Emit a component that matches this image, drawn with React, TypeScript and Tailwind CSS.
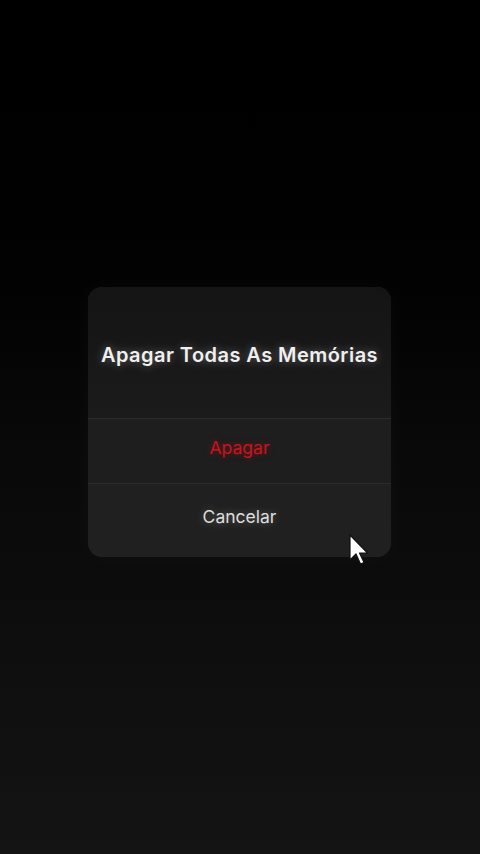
export default function App() {
  return (
    <div
      className="relative w-[480px] h-[854px] overflow-hidden bg-gradient-to-b from-[#000000] via-[#080808] to-[#141414]"
      style={{ fontFamily: "Inter, 'Noto Sans', sans-serif" }}
    >
      <div className="pt-[287px] pl-[88px]">
        <div className="w-[303px] rounded-[14px] overflow-hidden bg-[#1a1a1a] shadow-[0_0_24px_rgba(255,255,255,0.03)]">
          <div className="h-[131px] flex items-center justify-center pt-[5px] bg-gradient-to-b from-[#141414] to-[#1b1b1b]">
            <span className="text-[20px] font-semibold text-[#f0f0f0] tracking-[0.45px] [text-shadow:0_0_10px_rgba(255,255,255,0.35)]">
              Apagar Todas As Memórias
            </span>
          </div>
          <div className="h-[65px] flex items-center justify-center pb-[5px] border-t border-[#2c2c2c] bg-[#1e1e1e]">
            <span className="text-[17.5px] text-[#c8141c] [text-shadow:0_0_6px_rgba(200,20,28,0.5)]">Apagar</span>
          </div>
          <div className="h-[74px] flex items-start pt-[20px] justify-center border-t border-[#2c2c2c] bg-[#202020]">
            <span className="text-[17.5px] text-[#dedede] [text-shadow:0_0_8px_rgba(255,255,255,0.3)]">Cancelar</span>
          </div>
        </div>
      </div>
      <svg className="absolute left-[348px] top-[533px]" width="24" height="36" viewBox="0 0 24 36">
        <path d="M2 2 L2 27 L8 21 L12.5 31 L16 29.5 L11.5 20 L19.5 20 Z" fill="#ffffff" stroke="#111" strokeWidth="1.2" strokeLinejoin="round" />
      </svg>
    </div>
  );
}
